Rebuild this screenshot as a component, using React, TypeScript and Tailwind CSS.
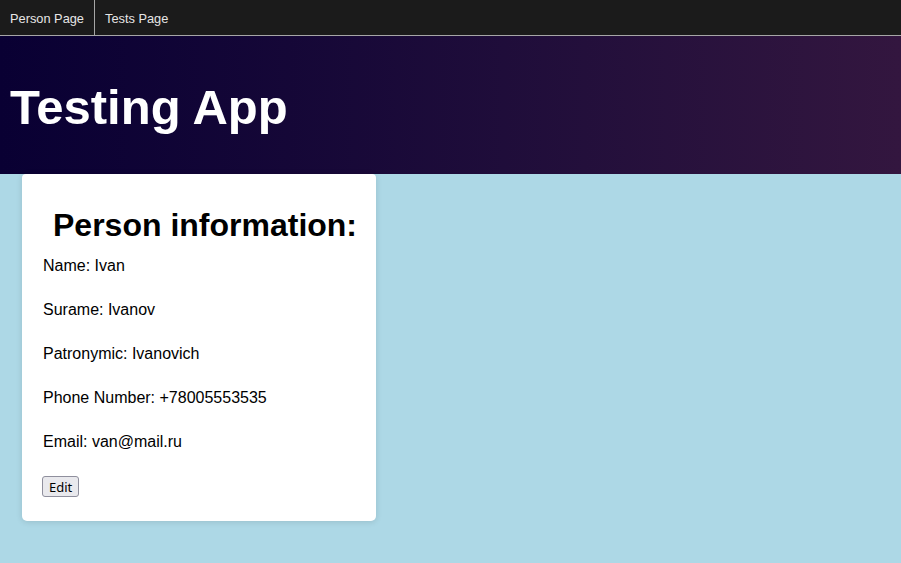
export default function App() {
  const rows = [
    "Name: Ivan",
    "Surame: Ivanov",
    "Patronymic: Ivanovich",
    "Phone Number: +78005553535",
    "Email: van@mail.ru",
  ];

  return (
    <div className="min-h-[563px] bg-[#add8e6] font-['Liberation_Sans',Arial,sans-serif]">
      <nav className="flex h-[36px] bg-[#1b1b1b] border-b border-[#a6a6a6]">
        <a className="flex items-center pt-[2px] px-[10px] text-[12.8px] text-[#e6e6e6] border-r border-[#a6a6a6]">
          Person Page
        </a>
        <a className="flex items-center pt-[2px] px-[10px] text-[12.8px] text-[#e6e6e6]">
          Tests Page
        </a>
      </nav>

      <header className="bg-gradient-to-r from-[#090033] to-[#33163f] pl-[10px] pt-[43px] pb-[39px]">
        <h1 className="text-[49px] leading-[56px] font-bold text-white">
          Testing App
        </h1>
      </header>

      <main className="pl-[22px]">
        <section className="w-[354px] bg-white rounded-[5px] rounded-t-[4px] shadow-[0_1px_6px_rgba(0,0,0,0.12)] pl-[21px] pr-[20px] pt-[33px] pb-[22px]">
          <h2 className="pl-[10px] text-[32px] leading-[37px] font-bold text-black whitespace-nowrap">
            Person information:
          </h2>
          <div className="flex flex-col gap-[26px] mt-[13px]">
            {rows.map((r) => (
              <p key={r} className="text-[16px] leading-[18px] text-black">
                {r}
              </p>
            ))}
          </div>
          <button className="mt-[25px] -ml-px h-[21px] px-[6px] rounded-[3px] border border-[#8f8f9d] bg-[#e9e9ed] text-[13px] leading-[18px] text-black font-['Noto_Sans',sans-serif]">
            Edit
          </button>
        </section>
      </main>
    </div>
  );
}
